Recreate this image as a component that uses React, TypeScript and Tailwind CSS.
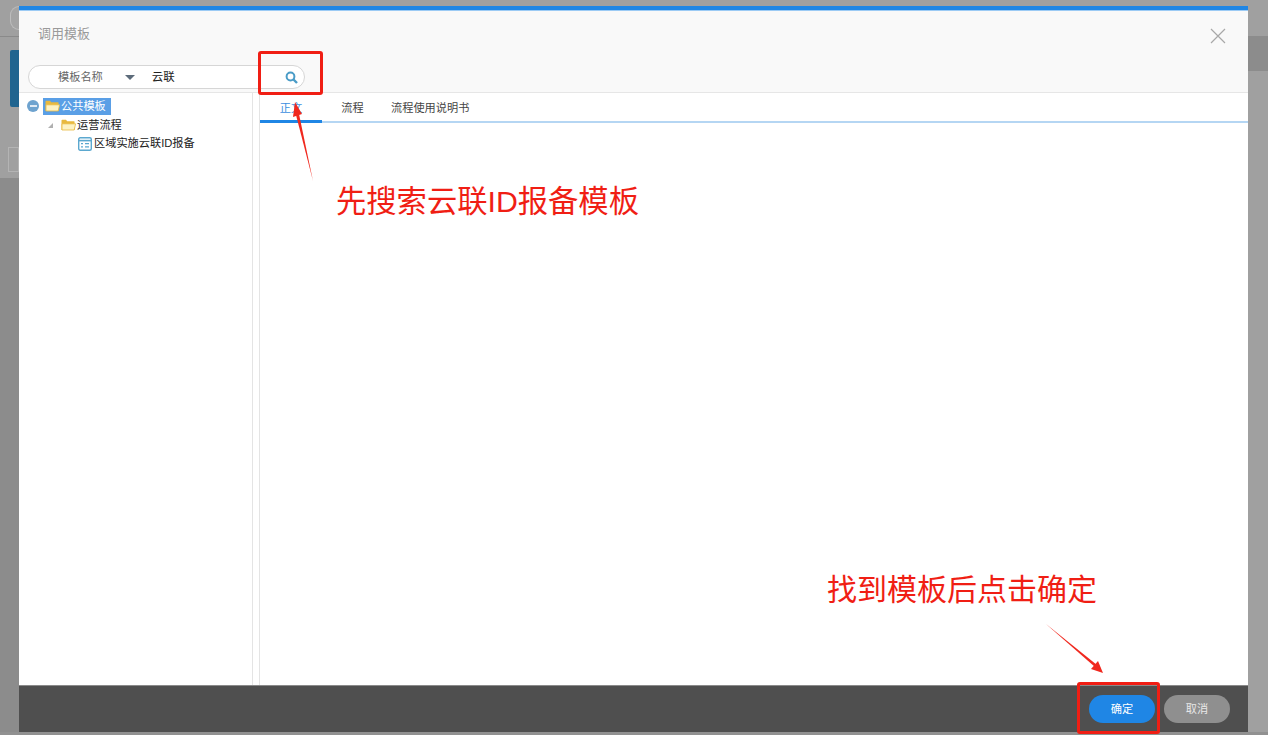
const cjk = "font-['Liberation_Sans','Noto_Sans_CJK_SC',sans-serif]";

function Folder({ className = "" }: { className?: string }) {
  return (
    <svg width="15" height="12" viewBox="0 0 15 12" className={className}>
      <path d="M0.5 11V1.5Q0.5 0.8 1.2 0.8H5L6.2 2.2H13Q13.6 2.2 13.6 3V11Z" fill="#e8b93f" />
      <path d="M1 4.8H14.6L13.2 11H1Z" fill="#fdf2c4" stroke="#e8b93f" strokeWidth="0.8" />
    </svg>
  );
}

function Tree() {
  return (
    <div className="w-[234px] shrink-0 border-r border-[#e4e4e4] pt-[4px] text-[11.2px] text-[#222]">
      <div className="flex h-[18px] items-center pl-[8px]">
        <span className="flex h-[12px] w-[12px] items-center justify-center rounded-full bg-[#6ea3cf]">
          <span className="h-[2px] w-[7px] bg-[#dfeaf4]" />
        </span>
        <span className="ml-[4px] flex h-[17px] w-[68px] items-center bg-[#5a9fe6] pl-[2px] text-white">
          <Folder />
          <span className="ml-px">公共模板</span>
        </span>
      </div>
      <div className="mt-px flex h-[18px] items-center pl-[29px]">
        <span className="h-0 w-0 border-b-[5px] border-l-[5px] border-b-[#b0b0b0] border-l-transparent" />
        <Folder className="ml-[8px]" />
        <span className="ml-px">运营流程</span>
      </div>
      <div className="flex h-[19px] items-center pl-[59px]">
        <svg width="14" height="14" viewBox="0 0 14 14">
          <rect x="0.7" y="0.7" width="12.6" height="12.6" rx="1.5" fill="#fff" stroke="#5ba8cf" strokeWidth="1.4" />
          <path d="M1 3.6H13" stroke="#5ba8cf" strokeWidth="1.6" />
          <path d="M3 6.6H5M7 6.6H11M3 9.8H5M7 9.8H11" stroke="#5ba8cf" strokeWidth="1.3" />
        </svg>
        <span className="ml-[2px]">区域实施云联ID报备</span>
      </div>
    </div>
  );
}

function Tabs() {
  return (
    <div className="flex h-[30px] border-b-2 border-[#b5d6f3] pt-[3px] text-[11.2px] text-[#444]">
      <div className="-mb-[2px] flex w-[62px] items-center justify-center border-b-[3px] border-[#1f86e5] text-[#3c8fe0]">正文</div>
      <div className="flex w-[61px] items-center justify-center">流程</div>
      <div className="ml-[8px] flex items-center">流程使用说明书</div>
    </div>
  );
}

function Modal() {
  return (
    <div className="flex h-[726px] w-[1229px] flex-col border-t-[4px] border-[#1f86e5] bg-white">
      <div className="h-px bg-[#9ccbf5]" />
      <div className="h-[82px] shrink-0 border-b border-[#e6e6e6] bg-[#f9f9f9] px-[19px]">
        <div className="flex items-start justify-between pt-[14px]">
          <span className="text-[13px] leading-[18px] text-[#9a9a9a]">调用模板</span>
          <svg width="16" height="16" viewBox="0 0 16 16" className="mr-[3px] mt-[3px]">
            <path d="M1 1L15 15M15 1L1 15" stroke="#a8a8a8" strokeWidth="1.2" />
          </svg>
        </div>
        <div className="ml-[-10px] mt-[21px] flex h-[24px] w-[277px] items-center rounded-full border border-[#d6d6d6] bg-white text-[11.2px]">
          <span className="ml-[29px] text-[#666]">模板名称</span>
          <span className="ml-[22px] h-0 w-0 border-x-[5px] border-t-[5px] border-x-transparent border-t-[#5d6b7a]" />
          <span className="ml-[17px] mt-px text-[11.5px] text-[#222]">云联</span>
          <svg width="13" height="13" viewBox="0 0 13 13" className="ml-auto mr-[6px]">
            <circle cx="5.5" cy="5.5" r="3.9" fill="none" stroke="#4a9cc7" strokeWidth="2" />
            <path d="M8.5 8.5L12 12" stroke="#4a9cc7" strokeWidth="2.4" />
          </svg>
        </div>
      </div>
      <div className="flex min-h-0 flex-1">
        <Tree />
        <div className="ml-[6px] flex-1 border-l border-[#e4e4e4]">
          <Tabs />
        </div>
      </div>
      <div className="flex h-[47px] shrink-0 items-center justify-end gap-[9px] border-t border-[#8a8a8a] bg-[#4f4f4f] pr-[18px] text-[11.2px]">
        <button className="h-[28px] w-[66px] rounded-full bg-[#1f86e5] text-white">确定</button>
        <button className="h-[28px] w-[66px] rounded-full bg-[#8f8f8f] text-[#e8e8e8]">取消</button>
      </div>
    </div>
  );
}

function Annotations() {
  return (
    <>
      <div className="absolute left-[258px] top-[51px] h-[44px] w-[65px] rounded-[3px] border-[3px] border-[#f01e14]" />
      <div className="absolute left-[1077px] top-[682px] h-[52px] w-[83px] rounded-[3px] border-[3px] border-[#f01e14]" />
      <svg width="1268" height="735" className="pointer-events-none absolute left-0 top-0">
        <path d="M313 181L299 114L296 115Z" fill="#f0281e" />
        <path d="M295 102L302 114L293 117Z" fill="#f0281e" />
        <path d="M1046 624L1095 667L1097 665Z" fill="#f0281e" />
        <path d="M1103 673L1091 669L1098 661Z" fill="#f0281e" />
      </svg>
      <div className="absolute left-[336px] top-[183px] text-[30.3px] leading-[38px] text-[#f01e14]">先搜索云联ID报备模板</div>
      <div className="absolute left-[827px] top-[571px] text-[30px] leading-[38px] text-[#f01e14]">找到模板后点击确定</div>
    </>
  );
}

export default function App() {
  return (
    <div className={`relative h-[735px] w-[1268px] overflow-hidden bg-[#a0a0a0] ${cjk}`}>
      {/* dimmed page behind the dialog */}
      <div className="absolute bottom-0 left-0 top-[178px] w-[19px] bg-[#8c8c8c]" />
      <div className="absolute bottom-0 left-0 h-[3px] w-full bg-[#919191]" />
      <div className="absolute left-[10px] top-[6px] h-[24px] w-[9px] rounded-l-full border border-r-0 border-[#bdbdbd] bg-[#a4a4a4]" />
      <div className="absolute left-0 top-[36px] h-px w-full bg-[#8a8a8a]" />
      <div className="absolute left-[10px] top-[50px] h-[57px] w-[9px] rounded-l-[2px] bg-[#20648f]" />
      <div className="absolute left-[8px] top-[147px] h-[25px] w-[11px] border border-[#b4b4b4] bg-[#a0a0a0]" />
      <div className="absolute right-0 top-[36px] h-[35px] w-[20px] bg-[#8c8c8c]" />
      <div className="relative flex h-full pl-[19px] pt-[6px]">
        <Modal />
      </div>
      <Annotations />
    </div>
  );
}
